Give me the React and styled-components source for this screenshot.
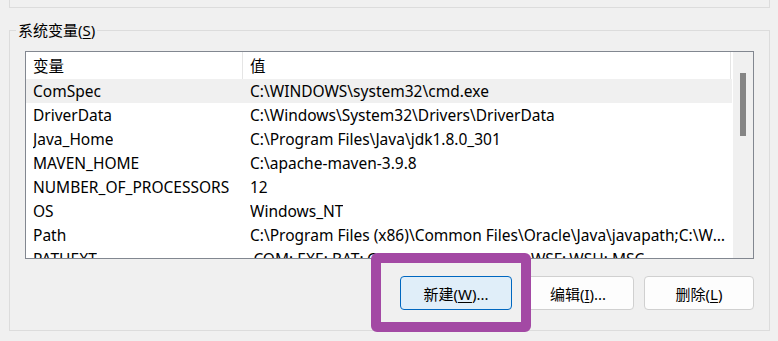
import React from "react";
import styled, { createGlobalStyle } from "styled-components";

const Global = createGlobalStyle`
  html, body { margin: 0; padding: 0; background: #f0f0f0; }
  body { font-family: "Noto Sans", "Noto Sans CJK SC", sans-serif; color: #000; }
  * { box-sizing: border-box; }
`;

const Page = styled.div`
  position: relative;
  width: 778px;
  height: 341px;
  overflow: hidden;
  background: #f0f0f0;
  font-size: 15.5px;
`;

const TopFrame = styled.div`
  margin: 0 8px 0 9px;
  height: 8px;
  border: 1px solid #dcdcdc;
  border-top: none;
`;

const Group = styled.fieldset`
  margin: 12px 8px 0 9px;
  height: 311px;
  border: 1px solid #dcdcdc;
  padding: 11px 15px 0 15px;
  min-width: 0;
`;

const Legend = styled.legend`
  padding: 0 2px;
  margin-left: -9px;
  line-height: 20px;
  font-size: 15px;
  u { text-decoration: underline; text-underline-offset: 2px; }
`;

const List = styled.div`
  display: flex;
  width: 729px;
  height: 208px;
  border: 1px solid #828790;
  background: #fff;
  overflow: hidden;
`;

const ListBody = styled.div`
  flex: 1;
  min-width: 0;
  display: flex;
  flex-direction: column;
`;

const Row = styled.div`
  display: grid;
  grid-template-columns: 217px 488px;
  height: ${(p) => (p.$header ? "27px" : "24px")};
  flex: none;
  background: ${(p) => (p.$selected ? "#f0f0f0" : "#fff")};
  align-items: center;
`;

const Cell = styled.div`
  padding-left: 7px;
  padding-right: 4px;
  white-space: nowrap;
  overflow: hidden;
  height: 100%;
  display: flex;
  align-items: center;
  border-right: ${(p) => (p.$header ? "1px solid #e5e5e5" : "none")};
`;

const CellText = styled.span`
  overflow: hidden;
  text-overflow: ellipsis;
  white-space: nowrap;
`;

const Scrollbar = styled.div`
  width: 21px;
  flex: none;
  background: #f0f0f0;
  border-left: 1px solid #fff;
  padding: 21px 0 0 7px;
`;

const Thumb = styled.div`
  width: 6px;
  height: 63px;
  background: #858585;
`;

const Buttons = styled.div`
  display: flex;
  justify-content: flex-end;
  gap: 10px;
  width: 729px;
  margin-top: 17px;
`;

const Button = styled.button`
  width: ${(p) => p.$w}px;
  height: 34px;
  border-radius: 4px;
  font-family: "Noto Sans", "Noto Sans CJK SC", sans-serif;
  font-size: 15px;
  color: #000;
  background: ${(p) => (p.$primary ? "#e0eef9" : "#fdfdfd")};
  border: 1px solid ${(p) => (p.$primary ? "#0067c0" : "#d0d0d0")};
  padding: 0;
  u { text-decoration: underline; text-underline-offset: 2px; }
`;

const Highlight = styled.div`
  position: absolute;
  left: 371px;
  top: 253px;
  width: 160px;
  height: 79px;
  border: 10px solid #a349a4;
  border-radius: 6px;
  pointer-events: none;
`;

const rows = [
  ["ComSpec", "C:\\WINDOWS\\system32\\cmd.exe"],
  ["DriverData", "C:\\Windows\\System32\\Drivers\\DriverData"],
  ["Java_Home", "C:\\Program Files\\Java\\jdk1.8.0_301"],
  ["MAVEN_HOME", "C:\\apache-maven-3.9.8"],
  ["NUMBER_OF_PROCESSORS", "12"],
  ["OS", "Windows_NT"],
  ["Path", "C:\\Program Files (x86)\\Common Files\\Oracle\\Java\\javapath;C:\\WINDOWS\\system32"],
  ["PATHEXT", ".COM;.EXE;.BAT;.CMD;.VBS;.VBE;.JS;.JSE;.WSF;.WSH;.MSC"],
];

export default function App() {
  return (
    <Page>
      <Global />
      <TopFrame />
      <Group>
        <Legend>
          系统变量(<u>S</u>)
        </Legend>
        <List>
          <ListBody>
            <Row $header>
              <Cell $header>变量</Cell>
              <Cell $header>值</Cell>
            </Row>
            {rows.map(([k, v], i) => (
              <Row key={k} $selected={i === 0}>
                <Cell>
                  <CellText>{k}</CellText>
                </Cell>
                <Cell>
                  <CellText>{v}</CellText>
                </Cell>
              </Row>
            ))}
          </ListBody>
          <Scrollbar>
            <Thumb />
          </Scrollbar>
        </List>
        <Buttons>
          <Button $primary $w={112}>
            新建(<u>W</u>)...
          </Button>
          <Button $w={112}>
            编辑(<u>I</u>)...
          </Button>
          <Button $w={110}>
            删除(<u>L</u>)
          </Button>
        </Buttons>
      </Group>
      <Highlight />
    </Page>
  );
}
